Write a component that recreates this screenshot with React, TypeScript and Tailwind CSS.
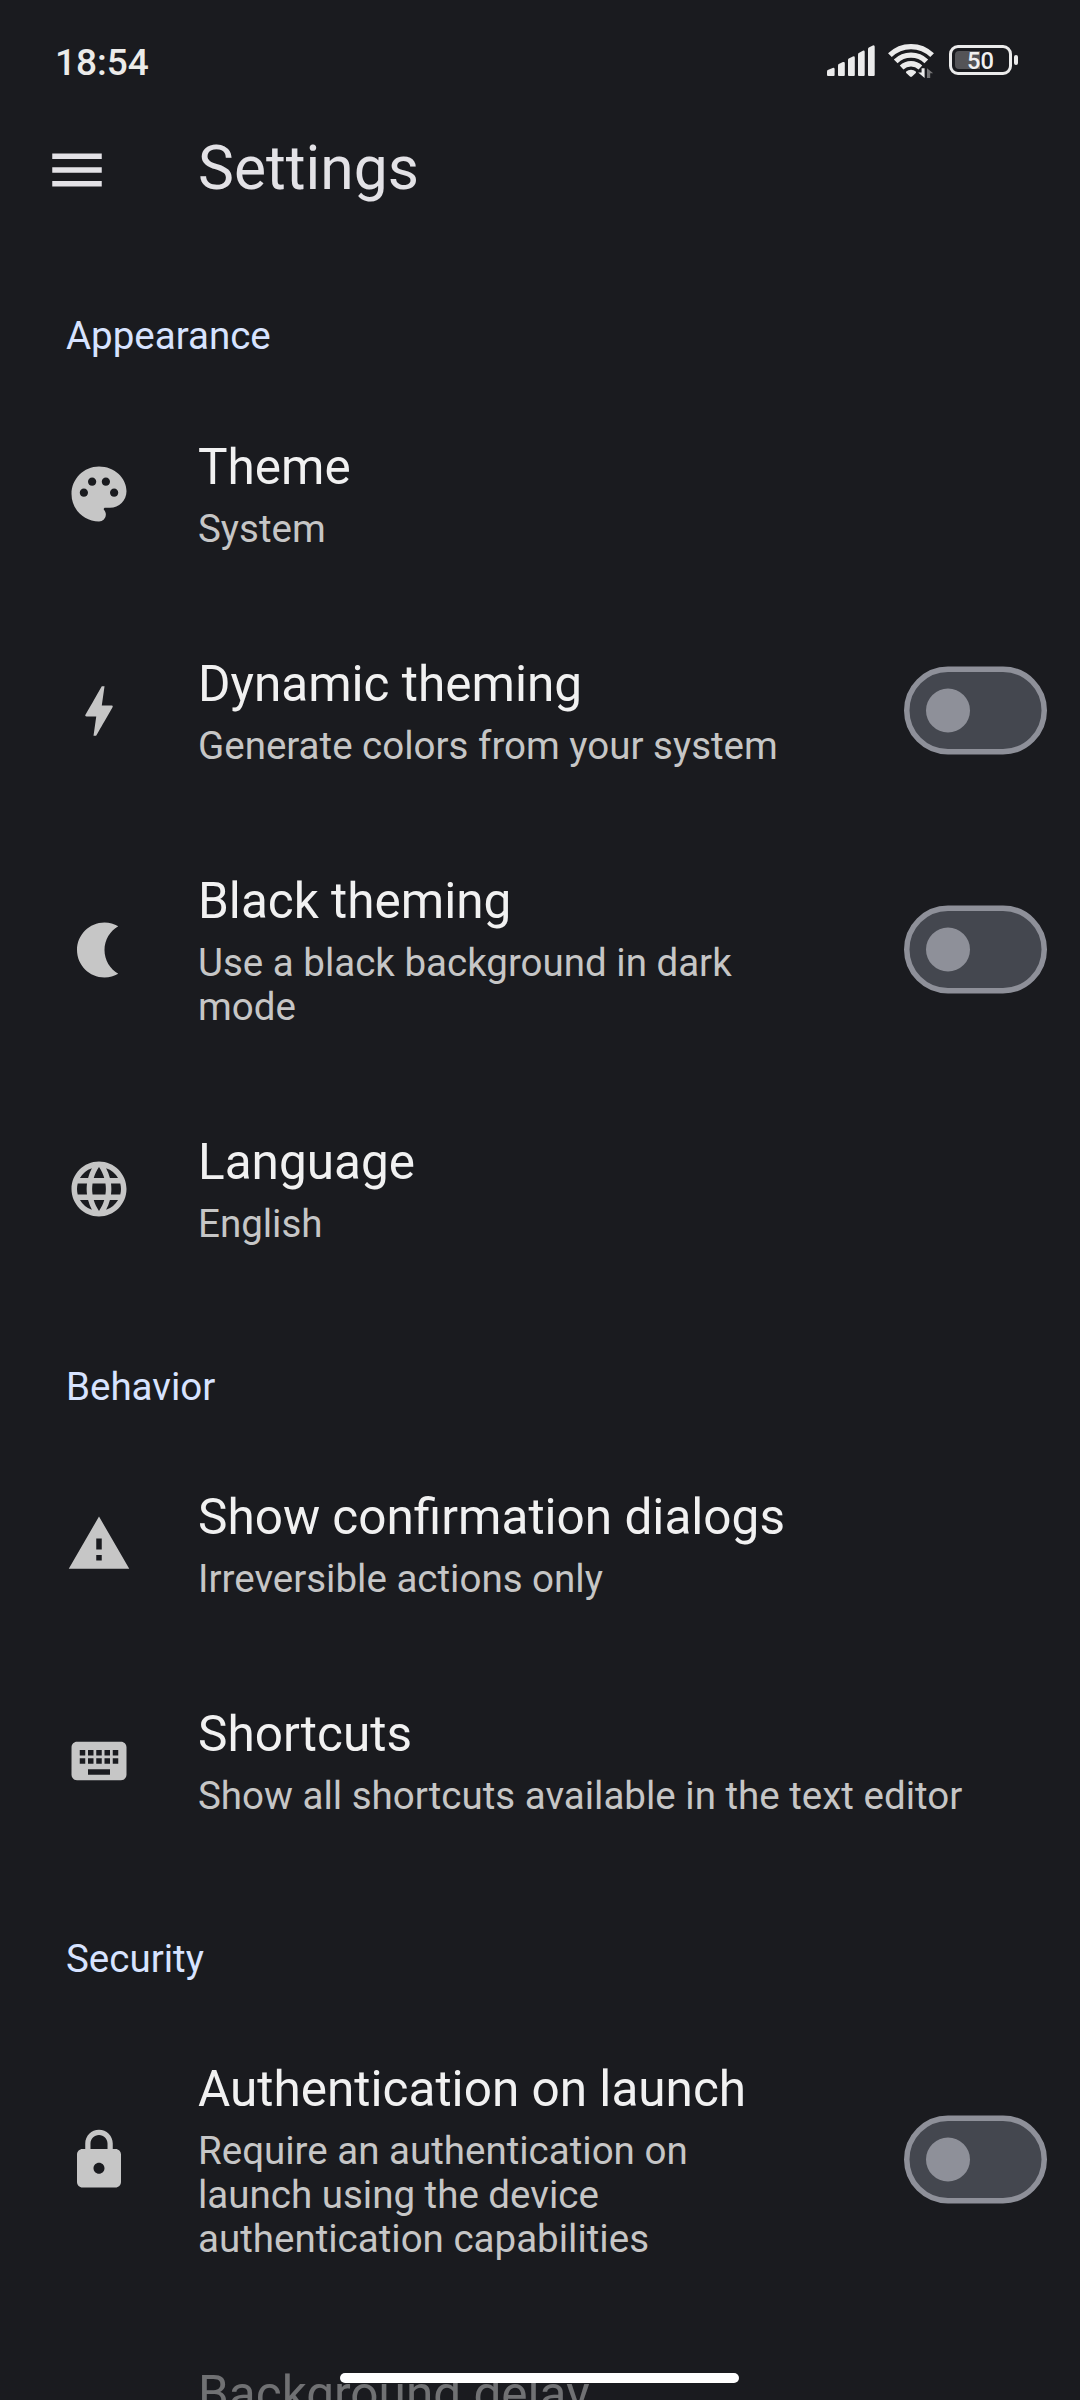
import type { ReactNode } from 'react';
import { MdKeyboard, MdLanguage, MdLock, MdMenu, MdPalette, MdWarning } from 'react-icons/md';

function BoltIcon() {
  return (
    <svg viewBox="0 0 24 24" className="size-[66px]" fill="currentColor">
      <path d="M11 21h-1l1-7H7.5c-.88 0-.33-.75-.31-.78C8.48 10.94 10.42 7.54 13.01 3h1l-1 7h3.51c.4 0 .62.19.4.66C12.97 17.55 11 21 11 21z" />
    </svg>
  );
}

function MoonIcon() {
  return (
    <svg viewBox="0 0 24 24" className="size-[66px]" fill="currentColor">
      <path d="M19 3.35C17.53 2.5 15.82 2 14 2 8.48 2 4 6.48 4 12s4.48 10 10 10c1.82 0 3.53-.5 5-1.35-2.99-1.73-5-4.95-5-8.65s2.01-6.92 5-8.65z" />
    </svg>
  );
}

function SignalIcon() {
  return (
    <svg width="48" height="32" viewBox="0 0 48 32" fill="#ebebeb">
      <path d="M0 26.4Q0 25.5 .8 25L5.6 22.9Q7.6 22.2 7.6 24.2V30Q7.6 31 6.6 31H1Q0 31 0 30z" />
      <path d="M11 20.4Q11 19.5 11.8 19L15.9 17.1Q17.8 16.4 17.8 18.4V30Q17.8 31 16.8 31H12Q11 31 11 30z" />
      <path d="M21 15Q21 14.1 21.8 13.6L25.9 11.4Q27.8 10.7 27.8 12.7V30Q27.8 31 26.8 31H22Q21 31 21 30z" />
      <path d="M31 9.4Q31 8.5 31.8 8L35.8 5.8Q37.7 5.1 37.7 7.1V30Q37.7 31 36.7 31H32Q31 31 31 30z" />
      <path d="M41 4Q41 3 41.8 2.4L45.8 .4Q47.7 -.2 47.7 1.8V30Q47.7 31 46.7 31H42Q41 31 41 30z" />
    </svg>
  );
}

function WifiIcon() {
  return (
    <svg width="46" height="36" viewBox="0 0 46 36" fill="none">
      <g stroke="#ebebeb" strokeWidth="5.3">
        <path d="M1.9 12.2a30.1 30.1 0 0 1 42.2 0" />
        <path d="M7.7 18.3a21.9 21.9 0 0 1 30.6 0" />
        <path d="M13.6 24.5a13.6 13.6 0 0 1 18.8 0" />
      </g>
      <path d="M18.2 28.6a7 7 0 0 1 9.6 0q.5.7 0 1.3l-3.8 3.7q-1 .8-2 0l-3.8-3.7q-.5-.6 0-1.3z" fill="#ebebeb" />
      <path d="M36.6 25.3v9.7l-6.4-5.6h3.4v-4.1z" fill="#ebebeb" />
      <path d="M39 35v-9.7l6.2 5h-3V35z" fill="#747476" />
    </svg>
  );
}

function Battery() {
  return (
    <div className="flex items-center">
      <div className="flex h-[30px] w-[63px] rounded-[9px] border-3 border-[#ebebeb] p-[3px]">
        <div className="h-[18px] w-[25px] rounded-l-[4px] bg-[#545457]" />
        <span className="-mt-[2px] -ml-[13px] text-[23.7px] leading-[24px] font-medium text-[#f0f0f0]">50</span>
      </div>
      <div className="ml-[2px] h-[10px] w-[4px] rounded-[2px] bg-[#ebebeb]" />
    </div>
  );
}

function Switch() {
  return (
    <svg width="143" height="89" viewBox="0 0 143 89" role="switch" aria-checked="false" className="shrink-0">
      <rect x="2.75" y="3.25" width="137.5" height="82.5" rx="41.25" fill="#44474f" stroke="#8e9099" strokeWidth="5.5" />
      <circle cx="44" cy="44.5" r="22" fill="#8e9099" />
    </svg>
  );
}

function SectionTitle({ children }: { children: ReactNode }) {
  return (
    <h2 className="px-[66px] pt-[67px] pb-[26px] text-[38.5px] leading-[45px] text-[#d7e3ff]">{children}</h2>
  );
}

type ItemProps = { icon?: ReactNode; title: string; summary?: string; toggle?: boolean; disabled?: boolean };

function Item({ icon, title, summary, toggle, disabled }: ItemProps) {
  return (
    <div className={disabled ? 'flex items-center pr-[33px] opacity-40' : 'flex items-center pr-[33px]'}>
      <div className="w-[198px] shrink-0 pt-px pl-[66px] text-[#c6c6c6]">{icon}</div>
      <div className={toggle ? 'w-[594px] pt-[53px] pb-[51px]' : 'pt-[53px] pb-[51px]'}>
        <div className="text-[49.5px] leading-[58px] whitespace-nowrap text-[#f1f1f1]">{title}</div>
        {summary && <div className="mt-[11px] text-[38.5px] leading-[44px] text-[#c6c6c6]">{summary}</div>}
      </div>
      {toggle && (
        <div className="ml-auto">
          <Switch />
        </div>
      )}
    </div>
  );
}

export default function App() {
  return (
    <div className="relative flex h-[2400px] w-[1080px] flex-col overflow-hidden bg-[#1a1b1f] font-[Roboto,sans-serif]">
      <header className="flex h-[120px] shrink-0 items-start justify-between pr-[62px] pl-[55px]">
        <span className="mt-[41px] text-[37px] leading-[44px] font-medium text-[#ebebe9]">18:54</span>
        <div className="flex items-start">
          <div className="mt-[45px]"><SignalIcon /></div>
          <div className="mt-[43px] ml-[13px]"><WifiIcon /></div>
          <div className="mt-[45px] ml-[15px]"><Battery /></div>
        </div>
      </header>
      <div className="flex h-[126px] shrink-0 items-start">
        <div className="w-[198px] pt-[17px] pl-[44px] text-[#e3e2e6]">
          <MdMenu className="size-[66px]" />
        </div>
        <h1 className="mt-[13px] text-[60.5px] leading-[71px] text-[#e3e2e6]">Settings</h1>
      </div>
      <main className="shrink-0">
        <div className="pb-px">
          <SectionTitle>Appearance</SectionTitle>
        </div>
        <Item icon={<MdPalette className="size-[66px]" />} title="Theme" summary="System" />
        <Item icon={<BoltIcon />} title="Dynamic theming" summary="Generate colors from your system" toggle />
        <Item icon={<MoonIcon />} title="Black theming" summary="Use a black background in dark mode" toggle />
        <Item icon={<MdLanguage className="size-[66px]" />} title="Language" summary="English" />
        <SectionTitle>Behavior</SectionTitle>
        <Item icon={<MdWarning className="size-[66px]" />} title="Show confirmation dialogs" summary="Irreversible actions only" />
        <Item icon={<MdKeyboard className="size-[66px]" />} title="Shortcuts" summary="Show all shortcuts available in the text editor" />
        <SectionTitle>Security</SectionTitle>
        <Item
          icon={<MdLock className="size-[66px]" />}
          title="Authentication on launch"
          summary="Require an authentication on launch using the device authentication capabilities"
          toggle
        />
        <Item title="Background delay" disabled />
      </main>
      <div className="absolute bottom-[17px] left-[340px] h-[10px] w-[399px] rounded-full bg-white" />
    </div>
  );
}
